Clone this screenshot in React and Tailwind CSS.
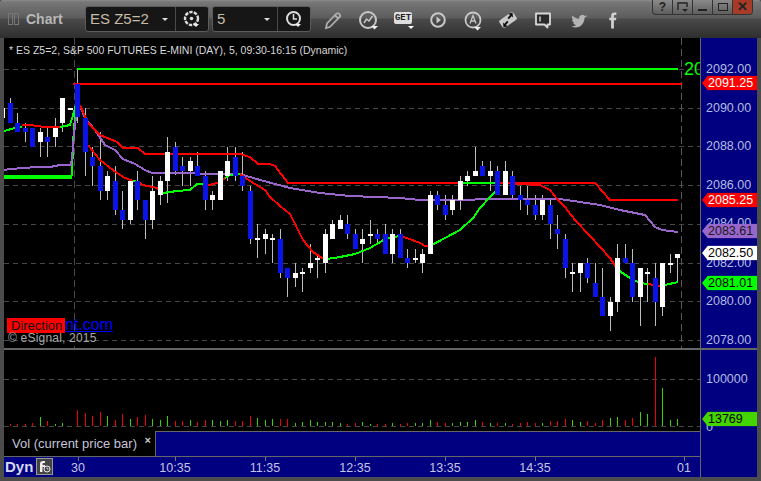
const W = "#ffffff";
const B = "#0a14e6";

// [high, low, bodyTop, bodyBottom, colour] in page pixels, first one is cut off by the frame
const CANDLES = [
  [103, 118, 108, 118, W], [98, 123, 103, 123, B], [113, 132, 123, 132, B], [123, 142, 128, 132, B],
  [128, 147, 128, 147, B], [128, 157, 132, 142, W], [128, 157, 137, 142, B], [118, 147, 128, 137, W],
  [98, 132, 98, 123, W], [108, 110, 108, 110, W], [69, 123, 84, 117, B], [108, 176, 118, 152, B],
  [147, 186, 157, 166, B], [132, 200, 166, 191, B], [171, 200, 176, 191, W], [166, 215, 181, 210, B],
  [191, 229, 210, 220, B], [181, 224, 181, 220, W], [171, 210, 181, 200, B], [200, 239, 200, 220, B],
  [176, 229, 191, 220, W], [176, 205, 181, 195, W], [137, 203, 152, 181, W], [142, 175, 147, 171, B],
  [157, 186, 166, 171, B], [157, 186, 161, 171, W], [152, 176, 166, 176, B], [171, 210, 176, 200, B],
  [191, 210, 195, 200, W], [171, 200, 171, 200, W], [147, 181, 161, 176, W], [147, 181, 157, 176, B],
  [152, 191, 176, 186, B], [186, 244, 191, 239, B], [224, 258, 238, 240, W], [229, 254, 234, 239, W],
  [234, 263, 238, 240, W], [229, 278, 239, 273, B], [268, 297, 268, 278, B], [263, 287, 273, 278, W],
  [268, 292, 272, 274, W], [244, 273, 263, 268, W], [254, 278, 258, 260, W], [229, 273, 234, 263, W],
  [220, 239, 224, 239, W], [215, 229, 220, 229, W], [215, 239, 224, 234, B], [229, 249, 234, 249, B],
  [229, 263, 239, 244, W], [220, 244, 234, 236, W], [229, 244, 234, 239, B], [224, 254, 234, 254, B],
  [229, 263, 234, 254, W], [229, 258, 234, 258, B], [249, 268, 258, 263, B], [249, 263, 258, 260, W],
  [249, 273, 254, 263, W], [191, 254, 195, 254, W], [191, 210, 195, 205, B], [195, 220, 205, 215, B],
  [195, 215, 200, 210, W], [176, 210, 181, 200, W], [171, 186, 176, 181, W], [147, 176, 171, 176, W],
  [161, 176, 166, 176, B], [161, 191, 171, 176, W], [166, 195, 171, 195, B], [161, 195, 171, 195, W],
  [171, 200, 176, 195, B], [186, 210, 195, 200, B], [186, 215, 200, 205, B], [195, 220, 205, 215, B],
  [195, 220, 200, 215, W], [200, 239, 205, 224, B], [215, 249, 229, 234, B], [234, 278, 239, 268, B],
  [263, 292, 272, 274, W], [263, 292, 263, 273, W], [258, 283, 263, 278, B], [263, 297, 283, 297, B],
  [268, 316, 297, 316, B], [297, 331, 302, 316, W], [244, 312, 258, 302, W], [244, 263, 258, 263, B],
  [249, 302, 263, 297, B], [268, 326, 268, 297, W], [268, 302, 272, 274, W], [263, 326, 278, 302, B],
  [263, 316, 263, 307, W], [254, 273, 263, 265, W], [254, 283, 254, 258, W],
];

const G = "#35d400";
const R = "#f00000";
// top of each volume bar, base is at y=426, same order as the candles
const VOLUME = [
  [423, G], [424, R], [424, R], [424, R], [423, R], [417, G], [421, R], [424, G], [423, G], null,
  [410, R], [413, R], [416, R], [412, R], [416, G], [420, R], [414, R], [419, G], [417, R], [415, R],
  [419, G], [420, G], [416, G], [421, R], [421, R], [420, G], [422, R], [420, R], [420, G], [421, G],
  [420, G], [421, R], [421, R], [416, R], [418, G], [420, G], [419, G], [419, R], [419, R], [423, G],
  [422, G], [420, G], [422, G], [422, G], [422, G], [423, G], [424, R], [423, R], [422, G], [424, G],
  [424, R], [424, R], [423, G], [424, R], [423, R], [423, G], [423, G], [420, G], [422, R], [423, R],
  [423, G], [422, G], [422, G], [420, G], [422, R], [423, G], [423, R], [423, G], [424, R], [423, R],
  [422, R], [423, R], [423, G], [421, R], [421, R], [419, R], [420, G], [422, G], [421, R], [423, R],
  [420, R], [418, G], [417, G], [420, R], [418, R], [412, G], [414, G], [357, R], [388, G], [420, G], [419, G],
];

const LINES = [
  { c: "#00ff00", w: 4, p: "4,177 72,177" },
  { c: "#00ff00", w: 2, p: "4,131 15,128 22,127" },
  { c: "#00ff00", w: 2, p: "72,176 73,143 76,104" },
  { c: "#00ff00", w: 2, p: "60,127 70,125 74,112 76,104" },
  { c: "#ff0000", w: 2, p: "22,125 30,125 45,127 60,127" },
  { c: "#9966cc", w: 2, p: "4,170 10,169 24,168 36,167 50,167 60,165 71,165 72,158 75,125 78,102 85,118 95,130 105,145 115,150 123,159 135,164 145,170 152,173 180,173 215,174 240,174 260,180 290,188 320,193 350,196 400,198 420,200 470,200 480,199 560,199 600,205 620,210 645,215 650,221 655,227 662,230 678,232" },
  { c: "#ff0000", w: 2, p: "80,105 88,123 100,135 117,142 123,148 138,148 145,154 240,154 250,157 258,164 270,164 275,166 288,183 460,183" },
  { c: "#00ff00", w: 2, p: "460,183 500,183" },
  { c: "#ff0000", w: 2, p: "500,183 595,183 610,200 678,200" },
  { c: "#ff0000", w: 2, p: "88,145 100,160 113,170 123,177 133,181" },
  { c: "#00ff00", w: 2, p: "133,181 138,182" },
  { c: "#ff0000", w: 2, p: "138,182 143,185 157,188 163,192" },
  { c: "#00ff00", w: 2, p: "163,193 177,191 190,190 197,184 203,184" },
  { c: "#ff0000", w: 2, p: "203,184 210,185 220,182 225,178" },
  { c: "#00ff00", w: 2, p: "225,178 230,175 240,174" },
  { c: "#ff0000", w: 2, p: "240,174 250,181 265,190 270,197 280,206 290,214 303,240 313,252 322,258 327,259" },
  { c: "#00ff00", w: 2, p: "327,259 340,257 355,254 370,248 387,238 400,236" },
  { c: "#ff0000", w: 2, p: "400,236 407,238 420,243 425,246 432,245" },
  { c: "#00ff00", w: 2, p: "432,245 445,238 460,230 473,218 480,208 490,197 497,190 500,185" },
  { c: "#ff0000", w: 2, p: "500,183 540,185 550,190 558,200 565,207 575,220 590,236 600,247 610,258 618,270" },
  { c: "#00ff00", w: 2, p: "618,270 630,278 640,283 648,284" },
  { c: "#ff0000", w: 2, p: "648,284 654,285 660,286" },
  { c: "#00ff00", w: 2, p: "660,286 665,285 678,282" },
];

const GRID_Y = [69, 108, 146, 185, 224, 263, 301, 340];
const PRICES = [
  ["2092.00", 69], ["2090.00", 108], ["2088.00", 146], ["2086.00", 185],
  ["2084.00", 223], ["2082.00", 263], ["2080.00", 301], ["2078.00", 340],
  ["100000", 379], ["0", 427],
];
const TAGS = [
  ["2091.25", 83, "bg-[#ff0000] text-white"],
  ["2085.25", 200, "bg-[#ff0000] text-white"],
  ["2083.61", 231, "bg-[#9966cc] text-[#1a1a1a]"],
  ["2082.50", 253, "bg-white text-black"],
  ["2081.01", 283, "bg-[#00ff00] text-black"],
  ["13769", 419, "bg-[#44d400] text-black"],
];
const TIMES = [["30", 78], ["10:35", 175], ["11:35", 265], ["12:35", 355], ["13:35", 445], ["14:35", 535], ["01", 684]];

const candleLeft = (i) => Math.floor(8 + 7.5 * (i - 1));

function Caret() {
  return <span className="w-0 h-0 border-x-[3px] border-x-transparent border-t-[3px] border-t-[#ddd]" />;
}

function Icon({ children, className = "" }) {
  return (
    <svg width="24" height="24" viewBox="0 0 24 24" className={className}>
      {children}
    </svg>
  );
}

function MiniCaret() {
  return <path d="M15 18h7l-3.500 3.500z" fill="#eee" />;
}

function HeaderIcons() {
  return (
    <div className="flex items-center ml-[6px] mt-[1px]">
      {/* pencil */}
      <Icon className="ml-[3px]">
        <path d="M6 20l1-4.500L16 6c1-1 2.600-1 3.500 0s.8 2.400-.2 3.400L9.800 19z M15 7.500l3.500 3" fill="none" stroke="#b0b0b0" strokeWidth="1.700" />
      </Icon>
      {/* chart circle */}
      <Icon className="ml-[12px]">
        <circle cx="12" cy="12" r="8" fill="none" stroke="#c8c8c8" strokeWidth="2" />
        <path d="M8 15l2.500-4 2.500 2 3.500-5" fill="none" stroke="#c8c8c8" strokeWidth="1.500" />
        <MiniCaret />
      </Icon>
      {/* GET */}
      <div className="relative ml-[11px] w-[24px] h-[24px] flex items-center justify-center">
        <span className="bg-[#dedede] text-[#222] text-[9px] leading-[12px] font-bold px-[1px] rounded-[2px] font-['Liberation_Mono',monospace] mt-[-3px]">GET</span>
        <span className="absolute right-[1px] bottom-[3px] w-0 h-0 border-x-[3px] border-x-transparent border-t-[3px] border-t-white" />
      </div>
      {/* play */}
      <Icon className="ml-[11px]">
        <circle cx="12" cy="12" r="6.800" fill="none" stroke="#c8c8c8" strokeWidth="2" />
        <path d="M10.500 8.500l4.500 3.500-4.500 3.500z" fill="#c8c8c8" />
      </Icon>
      {/* alert */}
      <Icon className="ml-[11px]">
        <circle cx="12" cy="12" r="7.500" fill="none" stroke="#c8c8c8" strokeWidth="1.800" />
        <path d="M9 15.500L12 7.500l3 8M10 13h4" fill="none" stroke="#c8c8c8" strokeWidth="1.300" />
        <path d="M13 19h7l-3.500 3.500z" fill="#eee" />
      </Icon>
      {/* swap */}
      <Icon className="ml-[11px]">
        <rect x="3.500" y="7.500" width="17" height="9" rx="2" transform="rotate(-35 12 12)" fill="#c8c8c8" />
        <path d="M16.500 4.500l.5 5-1.500-1.200-2.500 3-1.500-1.300 2.500-3-1.500-1.300zM7.500 19.500l-.5-5 1.500 1.200 2.500-3 1.500 1.300-2.500 3 1.500 1.300z" fill="#111" />
      </Icon>
      {/* speech box */}
      <Icon className="ml-[11px]">
        <path d="M5 5.500h14v11h-2.500v3l-3-3H5z" fill="#2a2a2a" stroke="#d8d8d8" strokeWidth="1.800" strokeLinejoin="round" />
        <path d="M9 8.500v5" stroke="#d8d8d8" strokeWidth="1.400" />
      </Icon>
      {/* twitter */}
      <Icon className="ml-[12px]">
        <g transform="translate(3 3.500) scale(.75)">
          <path d="M23 6.500c-.8.4-1.600.6-2.500.7.900-.5 1.600-1.400 1.900-2.400-.8.500-1.800.9-2.800 1.100a4.300 4.300 0 0 0-7.400 3.900C8.600 9.600 5.400 7.900 3.200 5.300c-1.100 2-.5 4.500 1.300 5.700-.7 0-1.300-.2-1.900-.5 0 2.100 1.500 3.900 3.500 4.300-.6.200-1.300.2-1.900.1.500 1.700 2.100 2.900 4 3-1.800 1.400-4.100 2-6.400 1.700 5.800 3.700 16.700 1.400 17.700-11.300.9-.6 1.700-1.300 2.500-2.300z" fill="#b4b4b4" />
        </g>
      </Icon>
      {/* facebook */}
      <Icon className="ml-[10px]">
        <g transform="translate(3 2.500) scale(.75)">
          <path d="M9.500 24V13H7V9.500h2.500V7c0-3 1.500-4.500 4.500-4.500h2.500v3.500h-2c-1 0-1.300.5-1.300 1.400V9.500h3.300l-.5 3.500h-2.800v11z" fill="#d0d0d0" />
        </g>
      </Icon>
    </div>
  );
}

function WindowButtons() {
  const btn = "w-[20px] h-full flex items-center justify-center border-r border-[#333]";
  return (
    <div className="absolute top-0 right-[8px] w-[101px] h-[15px] flex rounded-b-[4px] border border-t-0 border-[#333] overflow-hidden bg-[linear-gradient(#8a8a8a,#5e5e5e)]">
      <div className={`${btn} text-[#222] text-[12px] font-bold font-['Liberation_Sans',sans-serif]`}>?</div>
      <div className={btn}>
        <svg width="12" height="11" viewBox="0 0 12 11">
          <path d="M1 8V1h9v4" fill="none" stroke="#222" strokeWidth="1.400" />
          <path d="M5 7h6l-3 3z" fill="#222" />
        </svg>
      </div>
      <div className={btn}>
        <span className="w-[9px] h-[2px] bg-[#222] mt-[5px]" />
      </div>
      <div className={btn}>
        <span className="w-[10px] h-[8px] border border-[#222]" />
      </div>
      <div className="flex-1 flex items-center justify-center bg-[#a83a28] text-[#222] text-[13px] font-bold font-['Liberation_Sans',sans-serif]">✕</div>
    </div>
  );
}

function Header() {
  return (
    <div className="relative h-[38px] flex items-center pl-[8px] bg-[linear-gradient(#8c8c8c_0,#777_2px,#5c5c5c_18px,#4a4a4a_19px,#2e2e2e_38px)] rounded-t-[3px]">
      <div className="flex gap-[1px]">
        <span className="w-[5px] h-[12px] border border-[#777]" />
        <span className="w-[5px] h-[12px] border border-[#777]" />
      </div>
      <span className="ml-[7px] w-[59px] text-[14px] font-bold text-[#b8b8b8]">Chart</span>
      <div className="flex h-[26px] w-[124px] rounded-[3px] border border-[#5c5c5c] bg-[#161616]">
        <div className="flex-1 flex items-center justify-between pl-[4px] pr-[7px] text-[15px] text-[#c7bca8] border-r border-[#4a4a4a]">
          ES Z5=2
          <Caret />
        </div>
        <div className="w-[32px] flex items-center justify-center">
          <svg width="20" height="20" viewBox="0 0 20 20">
            <circle cx="9.500" cy="9.500" r="6.500" fill="none" stroke="#ddd" strokeWidth="2.400" strokeDasharray="3.400 1.200" />
            <circle cx="9.500" cy="9.500" r="1.800" fill="#ddd" />
            <path d="M11 15h6l-3 3z" fill="#eee" />
          </svg>
        </div>
      </div>
      <div className="flex h-[26px] w-[99px] ml-[3px] rounded-[3px] border border-[#5c5c5c] bg-[#161616]">
        <div className="flex-1 flex items-center justify-between pl-[4px] pr-[7px] text-[15px] text-[#c7bca8] border-r border-[#4a4a4a]">
          5
          <Caret />
        </div>
        <div className="w-[32px] flex items-center justify-center">
          <svg width="20" height="20" viewBox="0 0 20 20">
            <circle cx="9.500" cy="9.500" r="6.500" fill="none" stroke="#ddd" strokeWidth="2" />
            <path d="M9.500 5v5h3.500" fill="none" stroke="#ddd" strokeWidth="1.500" />
            <path d="M11 15h6l-3 3z" fill="#eee" />
          </svg>
        </div>
      </div>
      <HeaderIcons />
      <WindowButtons />
    </div>
  );
}

function PriceChart() {
  return (
    <div className="relative h-[310px] bg-black overflow-hidden">
      <svg width="696" height="310" viewBox="4 38 696 310" shapeRendering="crispEdges" className="block">
        {GRID_Y.map((y) => (
          <line key={y} x1="4" x2="700" y1={y + 0.5} y2={y + 0.5} stroke="#474747" strokeDasharray="5 4" />
        ))}
        <line x1="74.500" x2="74.500" y1="38" y2="348" stroke="#474747" strokeDasharray="7 4" />
        <line x1="681.500" x2="681.500" y1="38" y2="348" stroke="#5a5a5a" strokeDasharray="7 4" />
        {CANDLES.map(([hi, lo], i) => (
          <rect key={i} x={candleLeft(i) + 2} y={hi} width="1" height={lo - hi} fill="#bdbdbd" />
        ))}
        {LINES.map((l, i) => (
          <polyline key={i} points={l.p} fill="none" stroke={l.c} strokeWidth={l.w} />
        ))}
        <line x1="77" x2="678" y1="69" y2="69" stroke="#00ff00" strokeWidth="2" />
        <line x1="73" x2="682" y1="84" y2="84" stroke="#ff0000" strokeWidth="2" />
        {CANDLES.map(([, , top, bottom, color], i) => (
          <rect key={i} x={candleLeft(i)} y={top} width="5" height={bottom - top} fill={color} />
        ))}
      </svg>
      <span className="absolute left-[680px] top-[21px] text-[18px] leading-[20px] text-[#00ff00]">20</span>
      <div className="absolute left-[5px] top-[5px] text-[10.500px] leading-[14px] text-[#d8d8d8] whitespace-nowrap">
        * ES Z5=2, S&amp;P 500 FUTURES E-MINI (DAY), 5, 09:30-16:15 (Dynamic)
      </div>
      <span className="absolute left-[61px] top-[277px] text-[16px] leading-[20px] text-[#0000ff] underline">nt.com</span>
      <span className="absolute left-[3px] top-[280px] w-[58px] h-[15px] bg-[#ff0000] text-[#111] text-[13px] leading-[15px] pl-[4px]">Direction</span>
      <span className="absolute left-[4px] top-[293px] text-[12px] leading-[14px] text-[#a8a8a8] tracking-[0.2px]">© eSignal, 2015</span>
    </div>
  );
}

function VolumeChart() {
  return (
    <div className="h-[81px] bg-black">
      <svg width="696" height="81" viewBox="4 350 696 81" shapeRendering="crispEdges" className="block">
        <line x1="4" x2="700" y1="379.500" y2="379.500" stroke="#474747" strokeDasharray="5 4" />
        <line x1="4" x2="700" y1="426.500" y2="426.500" stroke="#474747" strokeDasharray="5 4" />
        {VOLUME.map((v, i) =>
          v ? <rect key={i} x={candleLeft(i) + 2} y={v[0]} width="1" height={426 - v[0]} fill={v[1]} /> : null
        )}
      </svg>
    </div>
  );
}

function TimeAxis() {
  return (
    <div className="relative h-[20px] bg-[#000080] border-t border-[#666] box-content">
      <span className="absolute left-[1px] top-[1px] text-[15px] leading-[18px] font-bold text-[#d8d8f0]">Dyn</span>
      <div className="absolute left-[32px] top-[1px] w-[17px] h-[17px] border border-[#999] bg-[#444] flex items-center justify-center">
        <svg width="13" height="13" viewBox="0 0 13 13">
          <path d="M2 12V4c0-2 1-3 3-3h2v2H5.500C5 3 4.500 3.500 4.500 4v1H7v2H4.500v5z" fill="#eee" />
          <circle cx="9" cy="9" r="3" fill="#444" stroke="#eee" />
          <path d="M9 7.500V9h1.500" fill="none" stroke="#eee" strokeWidth=".8" />
        </svg>
      </div>
      {TIMES.map(([label, x]) => (
        <div key={label}>
          <span className="absolute top-0 w-px h-[4px] bg-[#777]" style={{ left: x - 4 }} />
          <span
            className="absolute top-[4px] -translate-x-1/2 text-[12.500px] leading-[15px] text-[#c4c4e4]"
            style={{ left: x - 4 }}
          >
            {label}
          </span>
        </div>
      ))}
    </div>
  );
}

function PriceAxis() {
  return (
    <div className="relative w-[56px] bg-[#000080]">
      {PRICES.map(([label, y]) => (
        <span
          key={label}
          className="absolute left-[5px] -translate-y-1/2 text-[12.500px] leading-[15px] text-[#b4bce0]"
          style={{ top: y - 38 }}
        >
          {label}
        </span>
      ))}
      {/* divider between the price and volume panes */}
      <span className="absolute left-0 top-[310px] w-full h-[2px] bg-[#666]" />
      {TAGS.map(([label, y, colors]) => (
        <span
          key={label}
          className={`absolute left-px w-[55px] h-[15px] pl-[6px] text-[12.500px] leading-[15px] -translate-y-1/2 [clip-path:polygon(0_50%,6px_0,100%_0,100%_100%,6px_100%)] ${colors}`}
          style={{ top: y - 38 }}
        >
          {label}
        </span>
      ))}
    </div>
  );
}

export default function App() {
  return (
    <div className="w-[761px] h-[481px] flex flex-col bg-[#4c4c4c] overflow-hidden font-['Liberation_Sans',Arial,sans-serif]">
      <Header />
      <div className="flex-1 flex pl-[4px] pr-[4px] pb-[4px]">
        <div className="w-[696px] flex flex-col">
          <PriceChart />
          <div className="h-[2px] bg-[#666]" />
          <VolumeChart />
          <div className="h-[25px] flex bg-[#000080]">
            <div className="relative w-[151px] bg-black text-[13px] leading-[25px] text-[#c4c4d8] pl-[8px]">
              Vol (current price bar)
              <span className="absolute right-[4px] top-[-3px] text-[11px] font-bold text-[#ccc]">×</span>
            </div>
            <div className="flex-1 border-t border-l border-[#666]" />
          </div>
          <TimeAxis />
        </div>
        <div className="w-px bg-[#666]" />
        <PriceAxis />
      </div>
    </div>
  );
}
